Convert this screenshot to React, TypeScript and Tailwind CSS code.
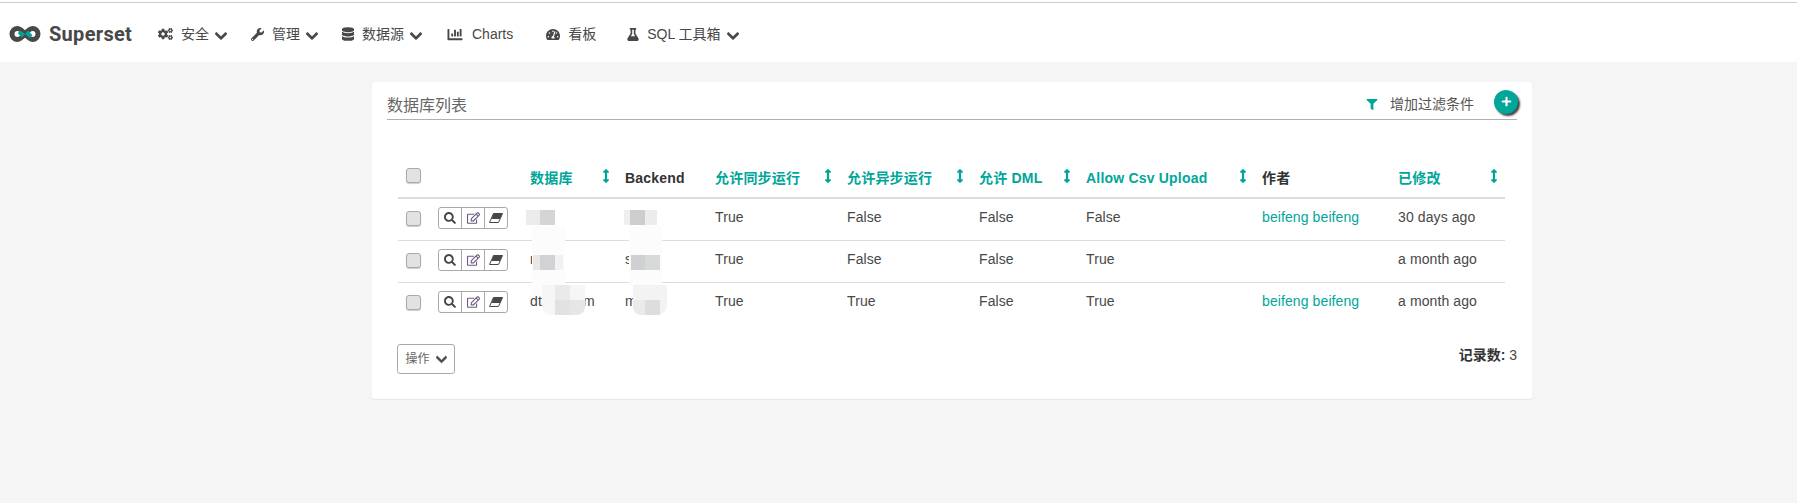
import React from 'react';
import {
  FaCogs, FaWrench, FaDatabase, FaChartBar, FaTachometerAlt, FaFlask, FaChevronDown,
  FaFilter, FaPlus, FaSearch, FaRegEdit, FaArrowsAltV,
} from 'react-icons/fa';

const fontStack = "font-['Liberation_Sans','Noto_Sans_CJK_SC',sans-serif]";

const navItems = [
  { icon: <FaCogs className="w-[15px] h-[14px]" />, label: '安全', caret: true, cls: 'ml-0' },
  { icon: <FaWrench className="w-[13px] h-[13px]" />, label: '管理', caret: true, cls: 'ml-6' },
  { icon: <FaDatabase className="w-[12px] h-[14px]" />, label: '数据源', caret: true, cls: 'ml-6' },
  { icon: <FaChartBar className="w-[16px] h-[15px]" />, label: 'Charts', caret: false, cls: 'ml-[25px]' },
  { icon: <FaTachometerAlt className="w-[14px] h-[13px]" />, label: '看板', caret: false, cls: 'ml-[33px]' },
  { icon: <FaFlask className="w-[12px] h-[13px]" />, label: 'SQL 工具箱', caret: true, cls: 'ml-[31px]' },
];

const columns = [
  { label: '', sort: false, link: false },
  { label: '', sort: false, link: false },
  { label: '数据库', sort: true, link: true },
  { label: 'Backend', sort: false, link: false },
  { label: '允许同步运行', sort: true, link: true },
  { label: '允许异步运行', sort: true, link: true },
  { label: '允许 DML', sort: true, link: true },
  { label: 'Allow Csv Upload', sort: true, link: true },
  { label: '作者', sort: false, link: false },
  { label: '已修改', sort: true, link: true },
];

const rows = [
  { db: '', backend: '', sync: 'True', async: 'False', dml: 'False', csv: 'False', author: 'beifeng beifeng', modified: '30 days ago' },
  { db: 'r', backend: 's', sync: 'True', async: 'False', dml: 'False', csv: 'True', author: '', modified: 'a month ago' },
  { db: 'dt', dbEnd: 'm', backend: 'm', sync: 'True', async: 'True', dml: 'False', csv: 'True', author: 'beifeng beifeng', modified: 'a month ago' },
];

// pixelated patches painted over the database names in the screenshot
const smudges = [
  // database column
  'left-[154px] top-[118px] w-[34px] h-[30px] bg-white rounded-t-[14px]',
  'left-[160px] top-[144px] w-[33px] h-[70px] bg-[#fcfcfc]',
  'left-[170px] top-[203px] w-[43px] h-[30px] bg-[#f6f6f6] rounded-b-[10px]',
  'left-[154px] top-[128px] w-[14px] h-[15px] bg-[#ebebeb]',
  'left-[168px] top-[128px] w-[15px] h-[15px] bg-[#d5d5d5]',
  'left-[161px] top-[173px] w-[7px] h-[15px] bg-[#e8e8e4]',
  'left-[168px] top-[173px] w-[15px] h-[15px] bg-[#d2d2d4]',
  'left-[183px] top-[173px] w-[8px] h-[15px] bg-[#eef2f2]',
  'left-[183px] top-[203px] w-[15px] h-[15px] bg-[#eaeaea]',
  'left-[183px] top-[218px] w-[15px] h-[15px] bg-[#e2e2e2]',
  'left-[198px] top-[218px] w-[15px] h-[15px] bg-[#e6e6e6] rounded-br-[8px]',
  // backend column
  'left-[252px] top-[118px] w-[33px] h-[30px] bg-white rounded-t-[14px]',
  'left-[257px] top-[144px] w-[33px] h-[60px] bg-[#fcfcfc]',
  'left-[261px] top-[203px] w-[34px] h-[30px] bg-[#f3f3f3] rounded-b-[10px]',
  'left-[252px] top-[128px] w-[6px] h-[15px] bg-[#efefef]',
  'left-[258px] top-[128px] w-[15px] h-[15px] bg-[#cdcdcd]',
  'left-[273px] top-[128px] w-[12px] h-[15px] bg-[#ececec]',
  'left-[259px] top-[173px] w-[14px] h-[15px] bg-[#d0d0d0]',
  'left-[273px] top-[173px] w-[15px] h-[15px] bg-[#d8dada]',
  'left-[261px] top-[218px] w-[12px] h-[15px] bg-[#eaeaea] rounded-bl-[8px]',
  'left-[273px] top-[218px] w-[15px] h-[15px] bg-[#dddddd]',
];

function Logo() {
  return (
    <svg width="32" height="16" viewBox="0 0 32 16" fill="none" className="shrink-0">
      <path d="M16 8c-2.500-3-4.500-5.500-7.500-5.500a5.500 5.500 0 0 0 0 11c3 0 5-2.500 7.500-5.500s4.500-5.500 7.500-5.500a5.500 5.500 0 0 1 0 11c-3 0-5-2.500-7.500-5.500z" stroke="#484848" strokeWidth="5" />
      <path d="M11 4.500 16 8l-3.200 3.600-4-4.400z" fill="#00a699" />
      <path d="M16 8l3.200-3.600 4.300 4.800-2.800 2.800L16 8z" fill="#00a699" />
    </svg>
  );
}

function Eraser() {
  return (
    <svg width="14" height="10" viewBox="0 0 14 10" className="text-[#484848]">
      <path d="M4.500.5H13.500L9.500 9.500H.5Z" fill="#fff" stroke="currentColor" strokeWidth="1" />
      <path d="M4.500.5H13.500L11 6H2.500Z" fill="currentColor" />
    </svg>
  );
}

function Checkbox() {
  return <div className="w-[15px] h-[15px] rounded-[3px] border border-[#aaa] bg-[#e2e2e2] shadow-[0_1px_1px_rgba(0,0,0,0.2)]" />;
}

function RowActions() {
  return (
    <div className="flex w-[70px] h-[22px] border border-[#aaa] rounded-[3px] divide-x divide-[#aaa] text-[#484848]">
      <span className="flex-1 flex items-center justify-center"><FaSearch className="w-[12px] h-[12px]" /></span>
      <span className="flex-1 flex items-center justify-center"><FaRegEdit className="w-[13px] h-[12px] text-[#6b5a80]" /></span>
      <span className="flex-1 flex items-center justify-center"><Eraser /></span>
    </div>
  );
}

export default function App() {
  return (
    <div className={`min-h-[503px] bg-[#f5f5f5] text-[14px] text-[#484848] ${fontStack}`}>
      <div className="h-[2px] bg-white" />
      <nav className="h-[60px] bg-white border-t border-[#ccc] flex items-center pl-[9px] pt-[3px]">
        <Logo />
        <span className="ml-[8px] font-['Roboto',sans-serif] font-bold text-[20px] tracking-[0.3px] text-[#484848] w-[109px]">Superset</span>
        {navItems.map(item => (
          <div key={item.label} className={`flex items-center ${item.cls}`}>
            {item.icon}
            <span className={`leading-5 ${item.label === 'Charts' ? 'ml-[9px]' : 'ml-2'}`}>{item.label}</span>
            {item.caret && <FaChevronDown className="ml-[6px] mt-[3px] w-[12px] h-[14px] stroke-current stroke-[30px]" />}
          </div>
        ))}
      </nav>

      <main className="pt-[20px]">
        <section className="relative ml-[372px] w-[1160px] h-[317px] bg-white rounded-[3px] shadow-[0_1px_1px_rgba(0,0,0,0.06)] px-[15px] flex flex-col">
          <header className="h-[38px] border-b border-[#b0b0b0] flex items-center justify-between pt-[8px]">
            <h2 className="text-[16px] font-normal text-[#666] mt-[2px]">数据库列表</h2>
            <div className="flex items-center">
              <FaFilter className="w-[12px] h-[11px] text-[#00a699]" />
              <span className="ml-[12px] text-[#555]">增加过滤条件</span>
              <button className="relative ml-[20px] mr-[-1px] mt-[-6px] w-[24px] h-[24px] rounded-full bg-[#00a699] text-white flex items-center justify-center shadow-[2px_2px_2px_#444]">
                <FaPlus className="w-[11px] h-[11px]" />
              </button>
            </div>
          </header>

          <table className="ml-[11px] mt-[38px] w-[1107px] table-fixed border-collapse">
            <colgroup>
              <col className="w-[32px]" />
              <col className="w-[92px]" />
              <col className="w-[95px]" />
              <col className="w-[90px]" />
              <col className="w-[132px]" />
              <col className="w-[132px]" />
              <col className="w-[107px]" />
              <col className="w-[176px]" />
              <col className="w-[136px]" />
              <col className="w-[115px]" />
            </colgroup>
            <thead>
              <tr className="h-[40px] border-b-2 border-[#ddd]">
                {columns.map((col, i) => (
                  <th key={i} className="px-2 text-left font-bold text-[14px] tracking-[0.2px]">
                    {i === 0 && <div className="mt-[-5px]"><Checkbox /></div>}
                    {col.label && (
                      <div className={`flex items-center justify-between pt-[1px] ${col.link ? 'text-[#00a699]' : 'text-[#333]'}`}>
                        <span>{col.label}</span>
                        {col.sort && <FaArrowsAltV className="w-[8px] h-[14px] mr-[-1px] mt-[-4px] text-[#00a699]" />}
                      </div>
                    )}
                  </th>
                ))}
              </tr>
            </thead>
            <tbody className="tracking-[0.1px]">
              {rows.map((row, i) => (
                <tr key={i} className={`h-[42px] ${i < 2 ? 'border-b border-[#ddd]' : ''}`}>
                  <td className="px-2 pb-[1px]"><Checkbox /></td>
                  <td className="px-2 pb-[2px]"><RowActions /></td>
                  <td className="px-2 pb-[4px]">
                    {row.db}
                    {row.dbEnd && <span className="ml-[41px]">{row.dbEnd}</span>}
                  </td>
                  <td className="px-2 pb-[4px]">{row.backend}</td>
                  <td className="px-2 pb-[4px]">{row.sync}</td>
                  <td className="px-2 pb-[4px]">{row.async}</td>
                  <td className="px-2 pb-[4px]">{row.dml}</td>
                  <td className="px-2 pb-[4px]">{row.csv}</td>
                  <td className="px-2 pb-[4px] text-[#00a699]">{row.author}</td>
                  <td className="px-2 pb-[4px]">{row.modified}</td>
                </tr>
              ))}
            </tbody>
          </table>

          <footer className="flex justify-between items-start mt-[20px] pl-[10px]">
            <button className="h-[30px] w-[58px] border border-[#aaa] rounded-[3px] flex items-center justify-center text-[12px] text-[#666]">
              操作<FaChevronDown className="ml-[6px] w-[11px] h-[13px] text-[#484848] stroke-current stroke-[30px]" />
            </button>
            <div className="mt-[1px]"><b className="text-[#333]">记录数:</b> 3</div>
          </footer>

          {smudges.map(cls => <div key={cls} className={`absolute ${cls}`} />)}
        </section>
      </main>
    </div>
  );
}
